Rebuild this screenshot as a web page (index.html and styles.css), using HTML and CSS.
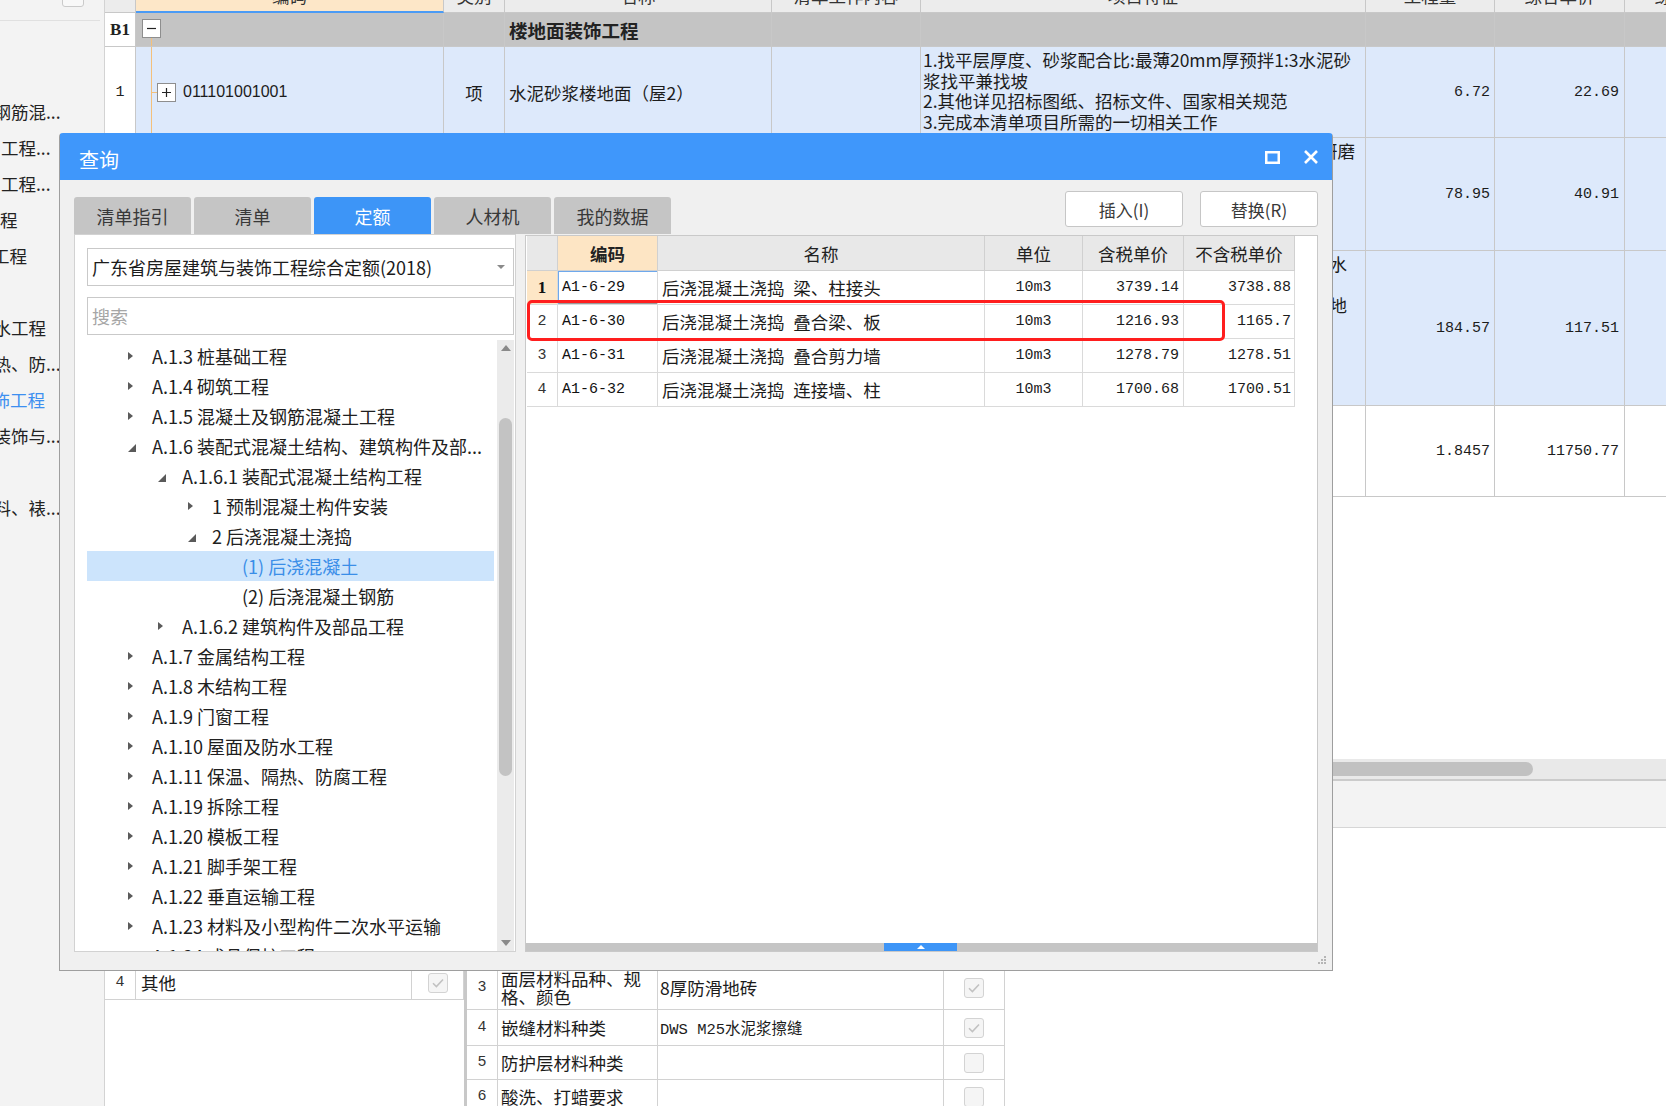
FILE: index.html
```html
<!DOCTYPE html>
<html lang="zh-CN">
<head>
<meta charset="utf-8">
<title>查询</title>
<link rel="stylesheet" href="styles.css">
</head>
<body>
<div class="app">
  <aside class="sidebar">
    <div class="side-top"><span class="collapse-btn">«</span></div>
    <ul class="side-list">
      <li><span class="m24">及钢筋混...</span></li>
      <li><span class="m1">工程...</span></li>
      <li><span class="m1">工程...</span></li>
      <li><span class="m17">工程</span></li>
      <li><span class="m8">工程</span></li>
      <li></li>
      <li><span class="m24">防水工程</span></li>
      <li><span class="m24">隔热、防...</span></li>
      <li class="cur"><span class="m25">装饰工程</span></li>
      <li><span class="m24">面装饰与...</span></li>
      <li></li>
      <li><span class="m24">材料、裱...</span></li>
    </ul>
  </aside>

  <main class="main">
    <div class="bt">
      <div class="c hd"><span></span></div>
      <div class="c hd hcode"><span>编码</span></div>
      <div class="c hd"><span>类别</span></div>
      <div class="c hd"><span>名称</span></div>
      <div class="c hd"><span>清单工作内容</span></div>
      <div class="c hd"><span>项目特征</span></div>
      <div class="c hd"><span>工程量</span></div>
      <div class="c hd"><span>综合单价</span></div>
      <div class="c hd"><span>综合合价</span></div>

      <div class="c no b1no">B1</div>
      <div class="c tcode0"><span class="tbox"><svg width="11" height="11" viewBox="0 0 11 11"><path d="M1 5.5H10" stroke="#222" stroke-width="1.2"/></svg></span></div>
      <div class="c g"></div>
      <div class="c g ttl">楼地面装饰工程</div>
      <div class="c g"></div>
      <div class="c g"></div>
      <div class="c g"></div>
      <div class="c g"></div>
      <div class="c g"></div>

      <div class="c no">1</div>
      <div class="c tcode"><span class="tbox"><svg width="11" height="11" viewBox="0 0 11 11"><path d="M1 5.5H10M5.5 1V10" stroke="#222" stroke-width="1.2"/></svg></span><span class="code-t">011101001001</span></div>
      <div class="c bl ctr">项</div>
      <div class="c bl nm">水泥砂浆楼地面（屋2）</div>
      <div class="c bl"></div>
      <div class="c bl feat">
        <div>1.找平层厚度、砂浆配合比:最薄20mm厚预拌1:3水泥砂</div>
        <div>浆找平兼找坡</div>
        <div>2.其他详见招标图纸、招标文件、国家相关规范</div>
        <div>3.完成本清单项目所需的一切相关工作</div>
      </div>
      <div class="c bl val">6.72</div>
      <div class="c bl val val2">22.69</div>
      <div class="c bl"></div>

      <div class="c no">2</div>
      <div class="c tcode"><span class="tbox"><svg width="11" height="11" viewBox="0 0 11 11"><path d="M1 5.5H10M5.5 1V10" stroke="#222" stroke-width="1.2"/></svg></span><span class="code-t">011102001001</span></div>
      <div class="c bl ctr">项</div>
      <div class="c bl nm">石材楼地面（楼1）</div>
      <div class="c bl"></div>
      <div class="c bl feat">
        <div class="rl pe8">1.面层材料品种、规格、颜色:20厚石材面层,表面研磨</div>
        <div>抛光处理</div>
        <div>2.其他详见招标图纸、招标文件、国家相关规范</div>
      </div>
      <div class="c bl val">78.95</div>
      <div class="c bl val val2">40.91</div>
      <div class="c bl"></div>

      <div class="c no">3</div>
      <div class="c tcode"><span class="tbox"><svg width="11" height="11" viewBox="0 0 11 11"><path d="M1 5.5H10M5.5 1V10" stroke="#222" stroke-width="1.2"/></svg></span><span class="code-t">011102003001</span></div>
      <div class="c bl ctr">项</div>
      <div class="c bl nm">块料楼地面（楼2）</div>
      <div class="c bl"></div>
      <div class="c bl feat">
        <div class="rl pe16">1.找平层厚度、砂浆配合比:20mm厚1:3干硬性水</div>
        <div>泥砂浆结合层</div>
        <div class="rl pe16">2.面层材料品种、规格、颜色:8厚防滑地</div>
        <div>砖,DWS M25水泥浆擦缝</div>
      </div>
      <div class="c bl val">184.57</div>
      <div class="c bl val val2">117.51</div>
      <div class="c bl"></div>

      <div class="c no">4</div>
      <div class="c tcode wh"><span class="code-t">A1-12-1</span></div>
      <div class="c wh ctr">定</div>
      <div class="c wh nm">楼地面水泥砂浆找平层</div>
      <div class="c wh"></div>
      <div class="c wh"></div>
      <div class="c wh val">1.8457</div>
      <div class="c wh val val2">11750.77</div>
      <div class="c wh"></div>
    </div>

    <div class="fill"></div>
    <div class="hs"><div class="hs-thumb"></div></div>
    <div class="status"></div>

    <div class="lower">
      <div class="lt">
        <div class="lc lno"></div><div class="lc">工作内容</div><div class="lc lchk">输出</div>
        <div class="lc lno">1</div><div class="lc">基层清理</div><div class="lc lchk"><span class="cb"></span></div>
        <div class="lc lno">2</div><div class="lc">抹找平层</div><div class="lc lchk"><span class="cb"></span></div>
        <div class="lc lno">3</div><div class="lc">面层铺设</div><div class="lc lchk"><span class="cb"></span></div>
        <div class="lc lno">4</div><div class="lc">其他</div><div class="lc lchk"><span class="cb"><svg width="12" height="10" viewBox="0 0 12 10"><path d="M1 5.2L4.4 8.5L11 1.5" fill="none" stroke="#c2c2c2" stroke-width="1.6"/></svg></span></div>
      </div>
      <div class="ldiv"></div>
      <div class="rt">
        <div class="lc lno"></div><div class="lc">特征</div><div class="lc lv">特征值</div><div class="lc lchk">输出</div>
        <div class="lc lno">1</div><div class="lc">找平层厚度、砂浆配合比</div><div class="lc lv">20mm厚1:3水泥砂浆</div><div class="lc lchk"><span class="cb"></span></div>
        <div class="lc lno">2</div><div class="lc">结合层厚度、砂浆配合比</div><div class="lc lv">干硬性水泥砂浆</div><div class="lc lchk"><span class="cb"></span></div>
        <div class="lc lno">3</div><div class="lc two"><span>面层材料品种、规<br>格、颜色</span></div><div class="lc lv">8厚防滑地砖</div><div class="lc lchk"><span class="cb"><svg width="12" height="10" viewBox="0 0 12 10"><path d="M1 5.2L4.4 8.5L11 1.5" fill="none" stroke="#c2c2c2" stroke-width="1.6"/></svg></span></div>
        <div class="lc lno">4</div><div class="lc">嵌缝材料种类</div><div class="lc lv lmono">DWS M25水泥浆擦缝</div><div class="lc lchk"><span class="cb"><svg width="12" height="10" viewBox="0 0 12 10"><path d="M1 5.2L4.4 8.5L11 1.5" fill="none" stroke="#c2c2c2" stroke-width="1.6"/></svg></span></div>
        <div class="lc lno">5</div><div class="lc">防护层材料种类</div><div class="lc lv"></div><div class="lc lchk"><span class="cb"></span></div>
        <div class="lc lno">6</div><div class="lc">酸洗、打蜡要求</div><div class="lc lv"></div><div class="lc lchk"><span class="cb"></span></div>
      </div>
    </div>
  </main>
</div>

<div class="dlg">
  <div class="dlg-title">
    <span class="dlg-name">查询</span>
    <div class="tb-icons">
      <svg width="15" height="13" viewBox="0 0 15 13"><rect x="1.25" y="1.25" width="12.5" height="10.5" fill="none" stroke="#fff" stroke-width="2.5"/></svg>
      <svg width="16" height="14" viewBox="0 0 16 14"><path d="M2 1L14 13M14 1L2 13" stroke="#fff" stroke-width="2.6"/></svg>
    </div>
  </div>
  <div class="dlg-body">
    <div class="toolbar">
      <div class="tabs">
        <span class="tab">清单指引</span>
        <span class="tab">清单</span>
        <span class="tab on">定额</span>
        <span class="tab">人材机</span>
        <span class="tab">我的数据</span>
      </div>
      <div class="btns">
        <span class="btn">插入(I)</span>
        <span class="btn">替换(R)</span>
      </div>
    </div>
    <div class="dlg-main">
      <div class="lp">
        <div class="sel"><span>广东省房屋建筑与装饰工程综合定额(2018)</span><span class="caret"></span></div>
        <div class="search">搜索</div>
        <div class="tree">
          <ul class="tree-list">
            <li class="tn l1"><span class="ar"><span class="tri-r"></span></span>A.1.3 桩基础工程</li>
            <li class="tn l1"><span class="ar"><span class="tri-r"></span></span>A.1.4 砌筑工程</li>
            <li class="tn l1"><span class="ar"><span class="tri-r"></span></span>A.1.5 混凝土及钢筋混凝土工程</li>
            <li class="tn l1"><span class="ar"><svg class="tri-d" width="8" height="8" viewBox="0 0 8 8"><path d="M8 0V8H0Z" fill="#5a5a5a"/></svg></span>A.1.6 装配式混凝土结构、建筑构件及部...</li>
            <li class="tn l2"><span class="ar"><svg class="tri-d" width="8" height="8" viewBox="0 0 8 8"><path d="M8 0V8H0Z" fill="#5a5a5a"/></svg></span>A.1.6.1 装配式混凝土结构工程</li>
            <li class="tn l3"><span class="ar"><span class="tri-r"></span></span>1 预制混凝土构件安装</li>
            <li class="tn l3"><span class="ar"><svg class="tri-d" width="8" height="8" viewBox="0 0 8 8"><path d="M8 0V8H0Z" fill="#5a5a5a"/></svg></span>2 后浇混凝土浇捣</li>
            <li class="tn l4 sel-row">(1) 后浇混凝土</li>
            <li class="tn l4">(2) 后浇混凝土钢筋</li>
            <li class="tn l2"><span class="ar"><span class="tri-r"></span></span>A.1.6.2 建筑构件及部品工程</li>
            <li class="tn l1"><span class="ar"><span class="tri-r"></span></span>A.1.7 金属结构工程</li>
            <li class="tn l1"><span class="ar"><span class="tri-r"></span></span>A.1.8 木结构工程</li>
            <li class="tn l1"><span class="ar"><span class="tri-r"></span></span>A.1.9 门窗工程</li>
            <li class="tn l1"><span class="ar"><span class="tri-r"></span></span>A.1.10 屋面及防水工程</li>
            <li class="tn l1"><span class="ar"><span class="tri-r"></span></span>A.1.11 保温、隔热、防腐工程</li>
            <li class="tn l1"><span class="ar"><span class="tri-r"></span></span>A.1.19 拆除工程</li>
            <li class="tn l1"><span class="ar"><span class="tri-r"></span></span>A.1.20 模板工程</li>
            <li class="tn l1"><span class="ar"><span class="tri-r"></span></span>A.1.21 脚手架工程</li>
            <li class="tn l1"><span class="ar"><span class="tri-r"></span></span>A.1.22 垂直运输工程</li>
            <li class="tn l1"><span class="ar"><span class="tri-r"></span></span>A.1.23 材料及小型构件二次水平运输</li>
            <li class="tn l1"><span class="ar"><span class="tri-r"></span></span>A.1.24 成品保护工程</li>
          </ul>
          <div class="vs">
            <span class="vs-up"></span>
            <span class="vs-thumb"></span>
            <span class="vs-down"></span>
          </div>
        </div>
      </div>
      <div class="grid">
        <div class="gt">
          <div class="gh"></div>
          <div class="gh ghc">编码</div>
          <div class="gh">名称</div>
          <div class="gh">单位</div>
          <div class="gh">含税单价</div>
          <div class="gh">不含税单价</div>

          <div class="gc gno gsel">1</div>
          <div class="gc gcode gfocus">A1-6-29</div>
          <div class="gc gname">后浇混凝土浇捣&ensp;梁、柱接头</div>
          <div class="gc gunit">10m3</div>
          <div class="gc gp">3739.14</div>
          <div class="gc gp gp2">3738.88</div>

          <div class="gc gno">2</div>
          <div class="gc gcode">A1-6-30</div>
          <div class="gc gname">后浇混凝土浇捣&ensp;叠合梁、板</div>
          <div class="gc gunit">10m3</div>
          <div class="gc gp">1216.93</div>
          <div class="gc gp gp2">1165.7</div>

          <div class="gc gno">3</div>
          <div class="gc gcode">A1-6-31</div>
          <div class="gc gname">后浇混凝土浇捣&ensp;叠合剪力墙</div>
          <div class="gc gunit">10m3</div>
          <div class="gc gp">1278.79</div>
          <div class="gc gp gp2">1278.51</div>

          <div class="gc gno">4</div>
          <div class="gc gcode">A1-6-32</div>
          <div class="gc gname">后浇混凝土浇捣&ensp;连接墙、柱</div>
          <div class="gc gunit">10m3</div>
          <div class="gc gp">1700.68</div>
          <div class="gc gp gp2">1700.51</div>
        </div>
        <div class="gs"><span class="gs-tab"><span class="gs-tri"></span></span></div>
      </div>
    </div>
    <div class="dlg-foot">
      <svg width="8" height="8" viewBox="0 0 8 8"><g fill="#b5b5b5"><rect x="6" y="0" width="2" height="2"/><rect x="3" y="3" width="2" height="2"/><rect x="6" y="3" width="2" height="2"/><rect x="0" y="6" width="2" height="2"/><rect x="3" y="6" width="2" height="2"/><rect x="6" y="6" width="2" height="2"/></g></svg>
    </div>
  </div>
  <div class="mark"></div>
</div>
</body>
</html>
```
FILE: styles.css
```css
* { box-sizing: border-box; margin: 0; padding: 0; }
html, body { width: 1666px; height: 1106px; overflow: hidden; }
body {
  position: relative;
  background: #fff;
  font-family: "Noto Sans CJK SC", "Liberation Sans", sans-serif;
  color: #1c1c1c;
}
ul { list-style: none; }

.app { display: flex; height: 1106px; }

/* ---------- left sidebar (background) ---------- */
.sidebar {
  width: 105px;
  flex: none;
  background: #f3f3f3;
  border-right: 1px solid #d3d3d3;
}
.side-top {
  height: 21px;
  margin-right: 4px;
  padding-left: 62px;
  border-bottom: 1px solid #e0e0e0;
  display: flex;
}
.collapse-btn {
  width: 22px;
  height: 22px;
  margin-top: -15px;
  border: 1px solid #cacaca;
  border-radius: 3px;
  background: #f8f8f8;
  color: #9a9a9a;
  font-size: 12px;
  line-height: 20px;
  text-align: center;
}
.side-list { margin-top: 73px; }
.side-list li {
  height: 36px;
  width: 61px;
  overflow: hidden;
  white-space: nowrap;
  font-size: 17.5px;
  line-height: 36px;
  color: #222;
}
.side-list span { display: inline-block; }
.side-list .cur { color: #3d8ff0; }
.m24 { margin-left: -24px; }
.m1 { margin-left: 1px; }
.m17 { margin-left: -17.5px; }
.m8 { margin-left: -8px; }
.m25 { margin-left: -25px; }

/* ---------- main background table ---------- */
.main {
  flex: 1;
  min-width: 0;
  display: flex;
  flex-direction: column;
  overflow: hidden;
}
.bt {
  flex: none;
  display: grid;
  grid-template-columns: 31px 308px 61px 267px 149px 445px 129px 130px 130px;
  grid-template-rows: 13px 34px 91px 113px 155px 91px;
}
.c {
  display: flex;
  align-items: center;
  overflow: hidden;
  white-space: nowrap;
  border-right: 1px solid #c8c8c8;
  border-bottom: 1px solid #c8c8c8;
  font-size: 17.5px;
  color: #1c1c1c;
}
.hd {
  background: #ececec;
  justify-content: center;
  align-items: flex-start;
  color: #333;
}
.hd span { margin-top: -14px; line-height: 20px; }
.hcode { background: #fde7c8; border-bottom: 2px solid #4b9bf5; }
.no {
  background: #fff;
  justify-content: center;
  font: 15px "Liberation Mono", monospace;
  color: #222;
}
.b1no { font: bold 17px "Liberation Serif", serif; }
.g { background: #c4c4c4; }
.bl { background: #dde9fb; }
.wh { background: #fff; }
.ttl { font-weight: bold; font-size: 18.5px; padding-left: 4px; color: #222; }
.ctr { justify-content: center; }
.nm { padding-left: 4px; }
.val {
  justify-content: flex-end;
  padding-right: 4px;
  font: 15px "Liberation Mono", monospace;
}
.val2 { padding-right: 5px; }
.feat {
  flex-direction: column;
  align-items: stretch;
  justify-content: flex-start;
  padding: 3px 2px 0;
  line-height: 20.5px;
}
.rl { display: flex; justify-content: flex-end; overflow: hidden; }
.pe8 { padding-right: 8px; }
.pe16 { padding-right: 16px; }

.tcode0 {
  align-items: flex-start;
  padding: 6px 0 0 6px;
  background:
    linear-gradient(#f4c07a, #f4c07a) 15px 25px / 1px 100% no-repeat,
    #c4c4c4;
}
.tcode {
  padding-left: 21px;
  gap: 7px;
  background:
    linear-gradient(#f4c07a, #f4c07a) 15px 0 / 1px 100% no-repeat,
    linear-gradient(#f4c07a, #f4c07a) 15px 50% / 6px 1px no-repeat,
    #dde9fb;
}
.tcode.wh {
  padding-left: 47px;
  background:
    linear-gradient(#f4c07a, #f4c07a) 15px 0 / 1px 100% no-repeat,
    #fff;
}
.tbox {
  width: 19px;
  height: 19px;
  flex: none;
  border: 1px solid #8e8e8e;
  background: #fff;
  display: flex;
  align-items: center;
  justify-content: center;
}
.code-t { font: 16px "Liberation Sans", sans-serif; color: #1c1c1c; }

.fill { height: 262px; flex: none; }
.hs {
  height: 20px;
  flex: none;
  background: #e9e9e9;
  display: flex;
  align-items: center;
}
.hs-thumb {
  margin-left: 1095px;
  width: 333px;
  height: 14px;
  border-radius: 7px;
  background: #c1c1c1;
}
.status {
  height: 49px;
  flex: none;
  background: #f3f3f3;
  border-top: 2px solid #cbcbcb;
  border-bottom: 1px solid #d6d6d6;
}

/* ---------- lower tables ---------- */
.lower { flex: 1; min-height: 0; display: flex; }
.lt {
  width: 359px;
  flex: none;
  display: grid;
  grid-template-columns: 31px 276px 52px;
  grid-template-rows: 33px 35px 35px 35px 34px;
  align-content: start;
}
.ldiv { width: 3px; flex: none; background: #c8c8c8; }
.rt {
  width: 538px;
  flex: none;
  display: grid;
  grid-template-columns: 31px 160px 286px 61px;
  grid-template-rows: 33px 52px 53px 44px 36px 34px 34px;
  align-content: start;
}
.lc {
  display: flex;
  align-items: center;
  overflow: hidden;
  white-space: nowrap;
  padding-left: 4px;
  border-right: 1px solid #d2d2d2;
  border-bottom: 1px solid #d2d2d2;
  font-size: 17.5px;
  color: #1c1c1c;
}
.lt .lc:nth-child(3n+2) { padding-left: 5px; }
.rt .lc:nth-child(4n+2) { padding-left: 3px; }
.lv { padding-left: 2px; }
.lmono { font-family: "Liberation Mono", "Noto Sans CJK SC", monospace; font-size: 15.5px; }
.lno {
  justify-content: center;
  padding-left: 0;
  font: 15px "Liberation Mono", monospace;
  color: #333;
}
.lchk { justify-content: center; padding-left: 0; }
.two span { line-height: 18px; }
.cb {
  width: 20px;
  height: 20px;
  border: 1px solid #d3d3d3;
  border-radius: 3px;
  background: #f5f5f5;
  display: flex;
  align-items: center;
  justify-content: center;
}

/* ---------- dialog ---------- */
.dlg {
  position: absolute;
  left: 59px;
  top: 133px;
  width: 1274px;
  height: 838px;
  background: #f0f0f0;
  border: 1px solid #9e9e9e;
  border-top-color: #3f97fb;
  border-radius: 4px 4px 0 0;
  display: flex;
  flex-direction: column;
}
.dlg-title {
  height: 46px;
  flex: none;
  background: #3f97fb;
  color: #fff;
  display: flex;
  align-items: center;
  padding: 0 13px 0 19px;
}
.dlg-name { font-size: 20px; margin-top: 5px; }
.tb-icons {
  margin-left: auto;
  display: flex;
  align-items: center;
  gap: 23px;
}
.dlg-body {
  flex: 1;
  display: flex;
  flex-direction: column;
  padding: 11px 14px 0;
}
.toolbar { height: 43px; flex: none; display: flex; }
.tabs { display: flex; gap: 3px; align-self: flex-end; }
.tab {
  width: 117px;
  height: 37px;
  background: #c5c5c5;
  border-radius: 3px 3px 0 0;
  display: flex;
  align-items: center;
  justify-content: center;
  font-size: 18px;
  color: #383838;
}
.tab.on { background: #3d95f7; color: #fff; }
.btns {
  margin-left: auto;
  align-self: flex-start;
  display: flex;
  gap: 17px;
}
.btn {
  width: 118px;
  height: 36px;
  background: #fff;
  border: 1px solid #c6c6c6;
  border-radius: 3px;
  display: flex;
  align-items: center;
  justify-content: center;
  font-size: 17px;
  color: #383838;
}
.dlg-main { height: 718px; flex: none; display: flex; gap: 9px; }

.lp {
  width: 442px;
  flex: none;
  background: #fff;
  border: 1px solid #d2d2d2;
  padding: 13px 1px 0 12px;
  display: flex;
  flex-direction: column;
}
.sel {
  height: 38px;
  flex: none;
  border: 1px solid #c9c9c9;
  display: flex;
  align-items: center;
  padding: 0 8px 0 4px;
  font-size: 18px;
  color: #1c1c1c;
}
.caret {
  margin-left: auto;
  width: 0;
  height: 0;
  border-top: 4px solid #8a8a8a;
  border-left: 4px solid transparent;
  border-right: 4px solid transparent;
}
.search {
  height: 38px;
  flex: none;
  margin-top: 11px;
  border: 1px solid #c9c9c9;
  padding-left: 4px;
  display: flex;
  align-items: center;
  font-size: 18px;
  color: #a6a6a6;
}
.tree {
  flex: 1;
  min-height: 0;
  margin-top: 5px;
  display: flex;
  overflow: hidden;
}
.tree-list { flex: 1; padding-top: 1px; overflow: hidden; }
.tn {
  height: 30px;
  margin-right: 3px;
  display: flex;
  align-items: center;
  white-space: nowrap;
  font-size: 18px;
  line-height: 24px;
  color: #202020;
}
.l1 { padding-left: 41px; }
.l2 { padding-left: 71px; }
.l3 { padding-left: 101px; }
.l4 { padding-left: 155px; }
.ar { width: 24px; flex: none; display: flex; align-items: center; }
.tri-r {
  width: 0;
  height: 0;
  border-left: 5px solid #5a5a5a;
  border-top: 4.5px solid transparent;
  border-bottom: 4.5px solid transparent;
}
.tri-d { margin-top: 4px; }
.sel-row { background: #cce4fc; color: #3a8ee8; }
.vs {
  width: 17px;
  flex: none;
  background: #ebebeb;
  display: flex;
  flex-direction: column;
  align-items: center;
}
.vs-up {
  margin-top: 5px;
  width: 0;
  height: 0;
  border-bottom: 6px solid #8a8a8a;
  border-left: 5px solid transparent;
  border-right: 5px solid transparent;
}
.vs-thumb {
  margin-top: 67px;
  width: 13px;
  height: 358px;
  border-radius: 7px;
  background: #c3c3c3;
}
.vs-down {
  margin-top: auto;
  margin-bottom: 5px;
  width: 0;
  height: 0;
  border-top: 6px solid #8a8a8a;
  border-left: 5px solid transparent;
  border-right: 5px solid transparent;
}

.grid {
  flex: 1;
  margin-top: 1px;
  background: #fff;
  border: 1px solid #c9c9c9;
  display: flex;
  flex-direction: column;
}
.gt {
  display: grid;
  grid-template-columns: 31px 100px 327px 98px 101px 111px;
  grid-template-rows: 35px;
  grid-auto-rows: 34px;
  padding-left: 1px;
}
.gh {
  background: #e8e8e8;
  border-right: 1px solid #d0d0d0;
  border-bottom: 1px solid #d0d0d0;
  display: flex;
  align-items: center;
  justify-content: center;
  font-size: 17.5px;
  color: #222;
}
.ghc { background: #fde5c4; font-weight: bold; }
.gc {
  border-right: 1px solid #dadada;
  border-bottom: 1px solid #dadada;
  display: flex;
  align-items: center;
  white-space: nowrap;
  overflow: hidden;
  font-size: 17.5px;
  line-height: 24px;
  color: #1c1c1c;
}
.gno {
  justify-content: center;
  font: 15px "Liberation Mono", monospace;
  color: #333;
}
.gsel { background: #fde6c6; font: bold 17px "Liberation Serif", serif; color: #111; }
.gcode { padding-left: 4px; font: 15px "Liberation Mono", monospace; color: #111; }
.gfocus { box-shadow: inset 1px 1px 0 #6ea8ec, inset 0 -2px 0 #9a9a9a; }
.gname { padding-left: 4px; }
.gunit { justify-content: center; font: 15px "Liberation Mono", monospace; }
.gp {
  justify-content: flex-end;
  padding-right: 4px;
  font: 15px "Liberation Mono", monospace;
}
.gp2 { padding-right: 3px; }
.gs {
  margin-top: auto;
  height: 8px;
  flex: none;
  background: #c5c5c5;
  display: flex;
}
.gs-tab {
  margin-left: 358px;
  width: 73px;
  background: #3d95f7;
  display: flex;
  align-items: center;
  justify-content: center;
}
.gs-tri {
  width: 0;
  height: 0;
  border-bottom: 4px solid #fff;
  border-left: 4px solid transparent;
  border-right: 4px solid transparent;
}
.dlg-foot {
  flex: 1;
  display: flex;
  justify-content: flex-end;
  align-items: flex-end;
  padding: 0 0 6px;
  margin-right: -8px;
}
.mark {
  position: absolute;
  left: 467px;
  top: 166px;
  width: 698px;
  height: 41px;
  border: 3px solid #ff1e1e;
  border-radius: 5px;
  pointer-events: none;
}
```
